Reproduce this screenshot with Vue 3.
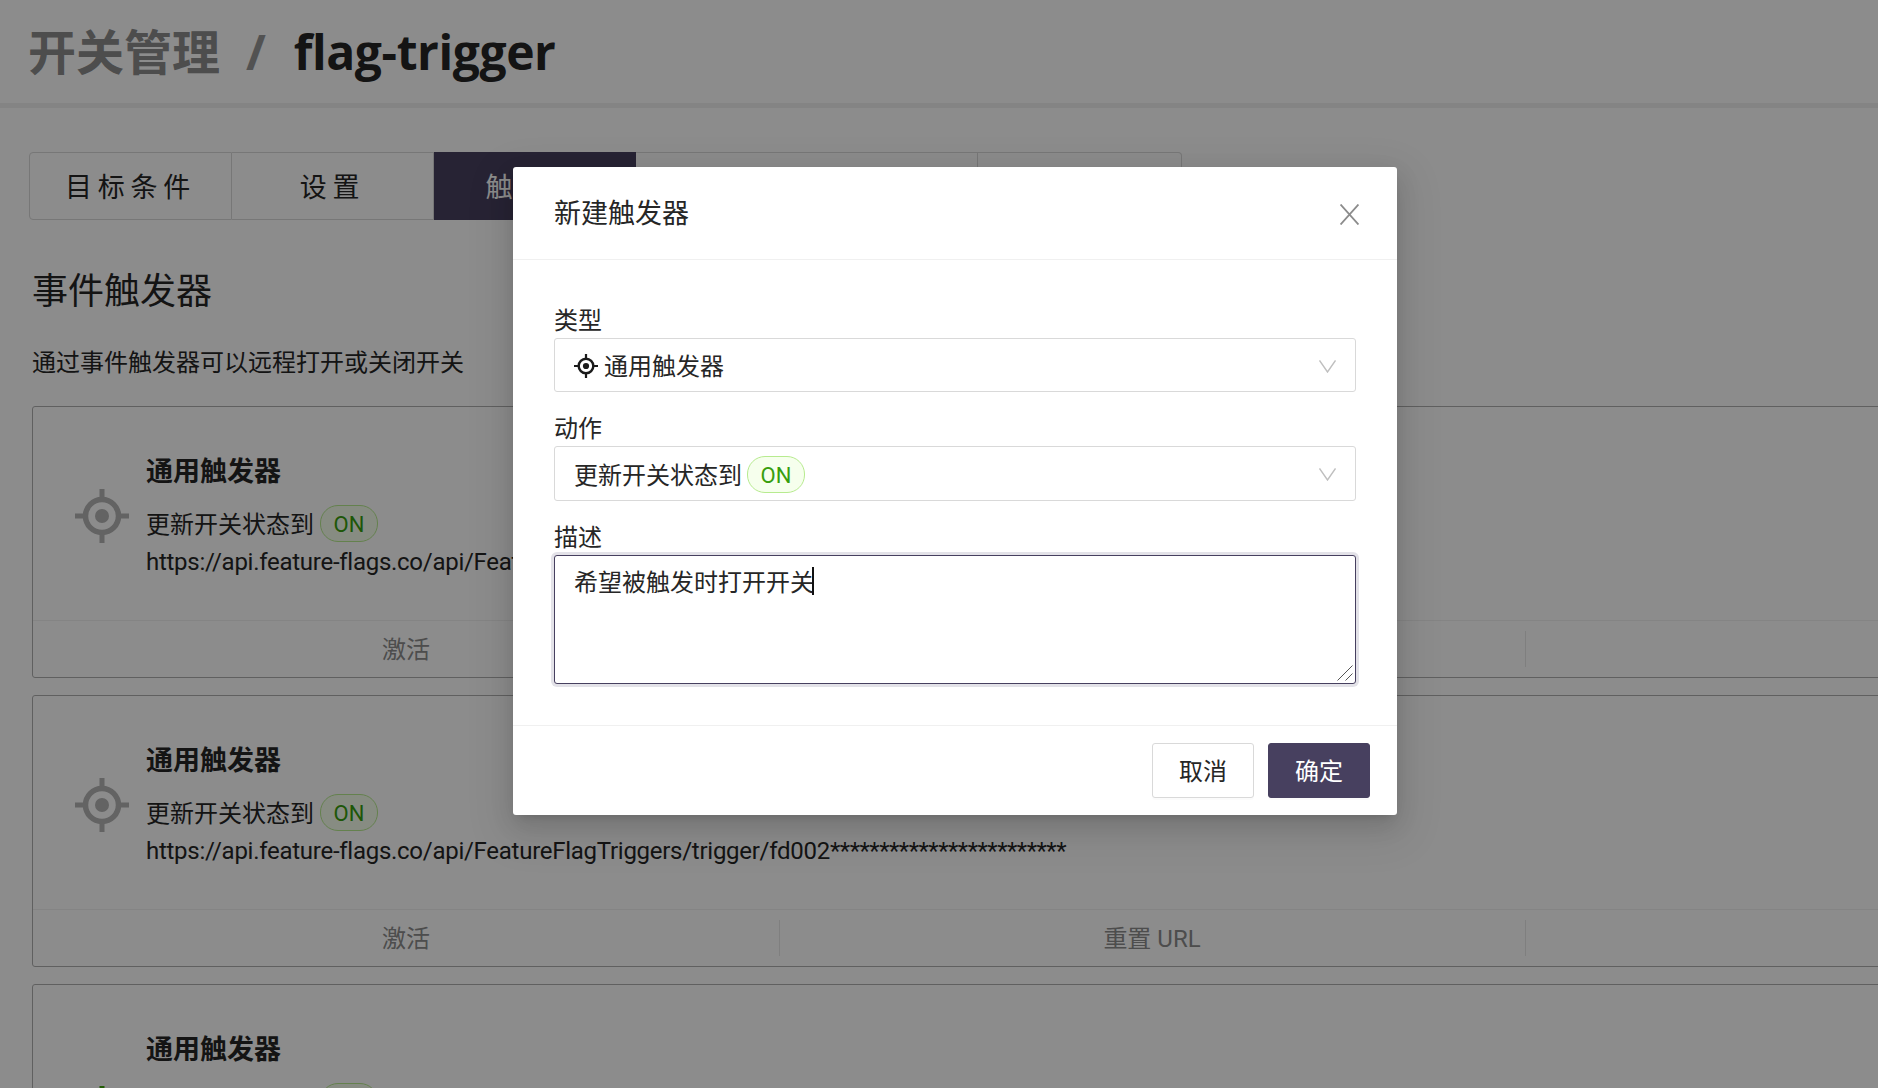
<template>
  <div class="page">
    <header class="page-header">
      <span class="crumb">开关管理</span>
      <span class="crumb-sep">/</span>
      <span class="crumb-current">flag-trigger</span>
    </header>

    <main class="content">
      <div class="tabs">
        <div
          v-for="tab in tabs"
          :key="tab.label"
          class="tab"
          :class="{ active: tab.active }"
          :style="{ width: tab.width + 'px' }"
        >
          {{ tab.label }}
        </div>
      </div>

      <h2 class="section-title">事件触发器</h2>
      <p class="section-desc">通过事件触发器可以远程打开或关闭开关</p>

      <div v-for="item in triggers" :key="item.url" class="card">
        <div class="card-body">
          <svg class="target" :class="{ on: item.enabled }" viewBox="0 0 54 54">
            <circle cx="27" cy="27" r="16.5" fill="none" stroke="currentColor" stroke-width="5.5" />
            <circle cx="27" cy="27" r="7" fill="currentColor" />
            <path d="M27 0v9M27 45v9M0 27h9M45 27h9" stroke="currentColor" stroke-width="5" />
          </svg>
          <div class="card-info">
            <div class="card-title">通用触发器</div>
            <div class="card-action"><span class="action-text">更新开关状态到</span> <span class="tag">ON</span></div>
            <div class="card-url">{{ item.url }}<span class="stars">************************</span></div>
            <div v-if="item.lastRun" class="card-url">{{ item.lastRun }}</div>
          </div>
        </div>
        <div class="card-actions">
          <div class="card-btn">激活</div>
          <div class="card-btn">重置 URL</div>
          <div class="card-btn"></div>
        </div>
      </div>
    </main>

    <div class="mask"></div>
    <div class="modal-wrap">
      <div class="modal">
        <div class="modal-header">
          <span class="modal-title">新建触发器</span>
          <svg class="close" viewBox="0 0 19 21">
            <path d="M0.5 0.5L18.5 20.5M18.5 0.5L0.5 20.5" fill="none" stroke="currentColor" stroke-width="1.9" />
          </svg>
        </div>

        <div class="modal-body">
          <label class="field-label">类型</label>
          <div class="select">
            <svg class="select-icon" viewBox="0 0 54 54">
              <circle cx="27" cy="27" r="16.5" fill="none" stroke="currentColor" stroke-width="5.5" />
              <circle cx="27" cy="27" r="7" fill="currentColor" />
              <path d="M27 0v9M27 45v9M0 27h9M45 27h9" stroke="currentColor" stroke-width="5" />
            </svg>
            <span class="select-text">通用触发器</span>
            <svg class="chevron" viewBox="0 0 17 13">
              <path d="M0.5 0.5L8.5 12L16.5 0.5" fill="none" stroke="currentColor" stroke-width="1.4" />
            </svg>
          </div>

          <label class="field-label">动作</label>
          <div class="select tall">
            <span class="select-text">更新开关状态到</span>
            <span class="tag">ON</span>
            <svg class="chevron" viewBox="0 0 17 13">
              <path d="M0.5 0.5L8.5 12L16.5 0.5" fill="none" stroke="currentColor" stroke-width="1.4" />
            </svg>
          </div>

          <label class="field-label">描述</label>
          <div class="textarea-wrap">
            <textarea v-model="description" class="textarea"></textarea>
            <i class="caret"></i>
            <svg class="grip" viewBox="0 0 16 16">
              <path d="M0.5 15.5L15.5 0.5M8.5 15.5L15.5 8.5" fill="none" stroke="#555" stroke-width="1" />
            </svg>
          </div>
        </div>

        <div class="modal-footer">
          <button class="btn">取消</button>
          <button class="btn btn-primary">确定</button>
        </div>
      </div>
    </div>
  </div>
</template>

<script setup>
import { ref } from 'vue'

const description = ref('希望被触发时打开开关')

const tabs = [
  { label: '目标条件', width: 203 },
  { label: '设置', width: 202 },
  { label: '触发器', width: 202, active: true },
  { label: '实验数据', width: 342 },
  { label: '审计日志', width: 204 }
]

const triggers = [
  {
    url: 'https://api.feature-flags.co/api/FeatureFlagTriggers/trigger/fd001',
    enabled: false
  },
  {
    url: 'https://api.feature-flags.co/api/FeatureFlagTriggers/trigger/fd002',
    enabled: false
  },
  {
    url: 'https://api.feature-flags.co/api/FeatureFlagTriggers/trigger/fd003',
    enabled: true,
    lastRun: '最近触发时间 2021-09-14 10:12'
  }
]
</script>

<style>
html,
body {
  margin: 0;
  overflow: hidden;
}
</style>

<style scoped>
.page {
  position: relative;
  width: 1878px;
  height: 1088px;
  overflow: hidden;
  background: #fff;
  color: #262626;
  font-family: Roboto, "Noto Sans CJK SC", sans-serif;
  font-size: 24px;
  line-height: 1.5;
}

.page-header {
  display: flex;
  align-items: center;
  height: 103px;
  padding-left: 28px;
  border-bottom: 5px solid #f0f0f0;
  font-family: "Open Sans", "Noto Sans CJK SC", sans-serif;
  font-size: 48px;
  font-weight: 700;
  box-sizing: content-box;
}

.crumb {
  color: #8c8c8c;
}

.crumb-sep {
  margin: 0 28px 0 26px;
  color: #969696;
  font-weight: 700;
}

.crumb-current {
  letter-spacing: -0.4px;
}

.content {
  padding: 44px 0 0 32px;
}

.tabs {
  display: flex;
  margin-left: -3px;
  height: 68px;
}

.tab {
  display: flex;
  align-items: center;
  justify-content: center;
  box-sizing: border-box;
  padding-top: 5px;
  border: 1px solid #d9d9d9;
  border-left-width: 0;
  font-size: 27px;
  letter-spacing: 5.7px;
}

.tab:first-child {
  border-left-width: 1px;
  border-radius: 4px 0 0 4px;
}

.tab:last-child {
  border-radius: 0 4px 4px 0;
}

.tab.active {
  background: #47405f;
  border-color: #47405f;
  color: #fff;
}

.section-title {
  margin: 45px 0 0;
  font-size: 36px;
  font-weight: 400;
  line-height: 54px;
}

.section-desc {
  margin: 26px 0 25px;
  line-height: 36px;
}

.card {
  box-sizing: border-box;
  width: 2238px;
  margin-bottom: 17px;
  border: 1px solid #b0b0b0;
  border-radius: 3px;
}

.card-body {
  display: flex;
  align-items: center;
  gap: 17px;
  padding: 44px 0 40px 42px;
}

.target {
  width: 54px;
  height: 54px;
  color: #b4b4b4;
  flex-shrink: 0;
}

.target.on {
  color: #3fa80a;
}

.card-title {
  height: 40px;
  font-size: 27px;
  font-weight: 700;
  line-height: 42px;
}

.card-action {
  display: flex;
  align-items: center;
  gap: 6px;
  margin-top: 14px;
  height: 37px;
}

.action-text {
  padding-top: 2px;
}

.card-url {
  line-height: 36px;
  margin-top: 2px;
  letter-spacing: -0.27px;
}

.stars {
  letter-spacing: -0.5px;
}

.card-actions {
  display: flex;
  height: 56px;
  border-top: 1px solid #f0f0f0;
}

.card-btn {
  position: relative;
  flex: 0 0 746px;
  display: flex;
  align-items: center;
  justify-content: center;
  padding-top: 2px;
  box-sizing: border-box;
  color: #8c8c8c;
}

.card-btn + .card-btn::before {
  content: '';
  position: absolute;
  left: 0;
  top: 10px;
  bottom: 10px;
  width: 1px;
  background: #e8e8e8;
}

.tag {
  display: inline-flex;
  align-items: center;
  justify-content: center;
  box-sizing: border-box;
  width: 58px;
  height: 37px;
  padding-top: 2px;
  border: 1px solid #b7eb8f;
  border-radius: 18px;
  background: #f6ffed;
  color: #389e0d;
  font-size: 22px;
}

.mask {
  position: absolute;
  inset: 0;
  background: rgba(0, 0, 0, 0.45);
}

.modal-wrap {
  position: absolute;
  inset: 0;
  padding: 167px 0 0 513px;
}

.modal {
  width: 884px;
  background: #fff;
  border-radius: 3px;
  box-shadow: 0 5px 9px -6px rgba(0, 0, 0, 0.18), 0 9px 24px 0 rgba(0, 0, 0, 0.12), 0 14px 42px 12px rgba(0, 0, 0, 0.07);
}

.modal-header {
  display: flex;
  align-items: center;
  justify-content: space-between;
  box-sizing: border-box;
  height: 93px;
  padding: 2px 38px 0 41px;
  border-bottom: 1px solid #f0f0f0;
}

.modal-title {
  font-size: 27px;
}

.close {
  width: 19px;
  height: 21px;
  color: #8c8c8c;
}

.modal-body {
  padding: 42px 41px 41px;
}

.field-label {
  display: block;
  height: 36px;
  line-height: 38px;
}

.select {
  display: flex;
  align-items: center;
  box-sizing: border-box;
  height: 54px;
  margin-bottom: 18px;
  padding: 2px 19px 0;
  border: 1px solid #d9d9d9;
  border-radius: 3px;
}

.select.tall {
  height: 55px;
}

.select-text {
  padding-top: 2px;
}

.select-icon {
  width: 24px;
  height: 24px;
  margin-right: 6px;
  color: #1a1a1a;
}

.select .tag {
  margin-left: 5px;
}

.chevron {
  width: 17px;
  height: 13px;
  margin-left: auto;
  color: #bfbfbf;
}

.textarea-wrap {
  position: relative;
  height: 129px;
}

.textarea {
  display: block;
  box-sizing: border-box;
  width: 100%;
  height: 129px;
  padding: 9px 19px;
  border: 1.5px solid #47405f;
  border-radius: 3px;
  outline: none;
  box-shadow: 0 0 0 3px #e3e2e8;
  color: #262626;
  font: inherit;
  line-height: 36px;
  resize: none;
}

.caret {
  position: absolute;
  left: 258px;
  top: 12px;
  width: 2px;
  height: 28px;
  background: #111;
}

.grip {
  position: absolute;
  right: 3px;
  bottom: 3px;
  width: 16px;
  height: 16px;
}

.modal-footer {
  display: flex;
  justify-content: flex-end;
  gap: 14px;
  padding: 17px 27px;
  border-top: 1px solid #f0f0f0;
}

.btn {
  width: 102px;
  height: 55px;
  padding: 2px 0 0;
  border: 1px solid #d9d9d9;
  border-radius: 3px;
  background: #fff;
  color: #262626;
  font: inherit;
  cursor: pointer;
  box-shadow: 0 2px 0 rgba(0, 0, 0, 0.015);
}

.btn-primary {
  border-color: #47405f;
  background: #47405f;
  color: #fff;
}
</style>
